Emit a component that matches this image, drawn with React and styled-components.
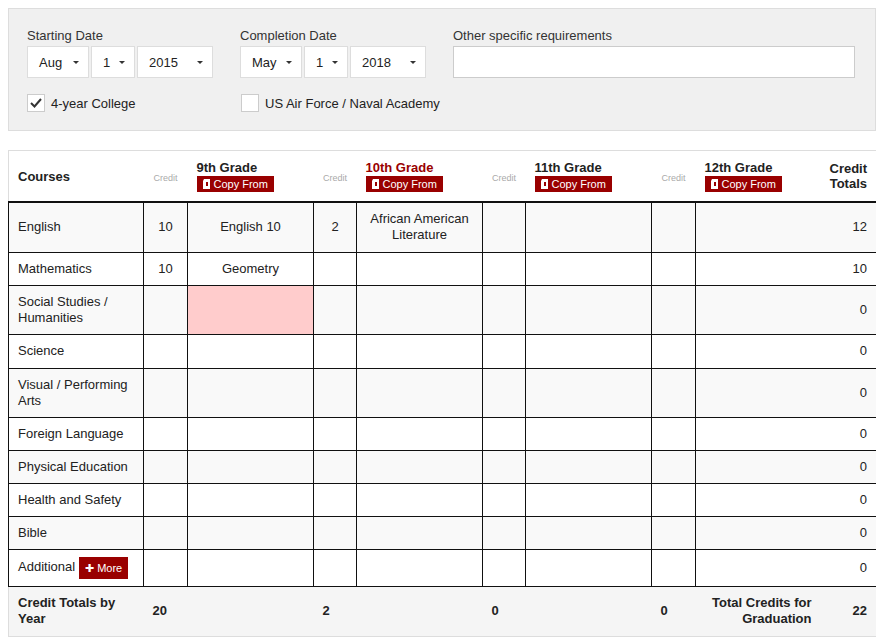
import React from 'react';
import styled, { createGlobalStyle } from 'styled-components';

const Global = createGlobalStyle`
  body { margin: 8px; font-family: "Liberation Sans", Arial, sans-serif; color: #222; background: #fff; }
`;

const Panel = styled.div`
  background: #f0f0f0;
  border: 1px solid #ddd;
  height: 123px;
  box-sizing: border-box;
  padding: 19px 18px 0;
  font-size: 13px;
  margin-bottom: 19px;
`;

const Row = styled.div`
  display: flex;
  gap: 27px;
`;

const Field = styled.div`
  display: flex;
  flex-direction: column;
  label { color: #333; margin-bottom: 1px; height: 17px; }
`;

const Selects = styled.div`
  display: flex;
  gap: 2px;
`;

const Select = styled.div`
  width: ${p => p.w}px;
  height: 32px;
  box-sizing: border-box;
  background: #fff;
  border: 1px solid #ddd;
  display: flex;
  align-items: center;
  justify-content: space-between;
  padding: 0 9px 0 11px;
  font-size: 13px;
  &::after { content: ''; border: 3px solid transparent; border-top: 3px solid #333; margin-top: 3px; }
`;

const TextInput = styled.div`
  width: 402px;
  height: 32px;
  box-sizing: border-box;
  background: #fff;
  border: 1px solid #ccc;
`;

const Checks = styled.div`
  display: flex;
  margin-top: 16px;
`;

const Check = styled.div`
  display: flex;
  align-items: center;
  gap: 6px;
  width: ${p => p.w}px;
`;

const Box = styled.div`
  width: 16px;
  height: 16px;
  border: 1px solid #ccc;
  background: #fff;
  display: flex;
  align-items: center;
  justify-content: center;
`;

const Table = styled.table`
  border-collapse: collapse;
  width: 868px;
  font-size: 13px;
  table-layout: fixed;
  border: 1px solid #ddd;
`;

const Th = styled.th`
  height: 50px;
  text-align: ${p => p.align || 'left'};
  padding: 0 9px;
  font-weight: bold;
  vertical-align: middle;
  border-bottom: 2px solid #111;
  color: ${p => (p.red ? '#990000' : '#222')};
`;

const CreditLbl = styled.span`
  font-size: 9px;
  color: #aaa;
  font-weight: normal;
`;

const CopyBtn = styled.div`
  display: inline-flex;
  align-items: center;
  gap: 3px;
  background: #990000;
  color: #fff;
  font-size: 11px;
  font-weight: normal;
  padding: 2px 6px;
  margin-top: 1px;
`;

const Tr = styled.tr`
  background: ${p => (p.stripe ? '#f9f9f9' : '#fff')};
  height: ${p => p.h}px;
`;

const Td = styled.td`
  border: 1px solid #111;
  border-right: ${p => (p.noRight ? 'none' : '1px solid #111')};
  border-left: ${p => (p.noLeft ? 'none' : '1px solid #111')};
  padding: 0 9px;
  text-align: ${p => p.align || 'left'};
  background: ${p => (p.pink ? '#ffcccc' : 'transparent')};
  line-height: 16px;
`;

const MoreBtn = styled.span`
  display: inline-block;
  background: #990000;
  color: #fff;
  font-size: 11px;
  padding: 3px 6px;
  margin-left: 4px;
  vertical-align: middle;
`;

const Foot = styled.tr`
  background: #f5f5f5;
  height: 50px;
  font-weight: bold;
  td { padding: 0 9px; line-height: 16px; }
`;

const FootNum = styled.td`
  text-align: ${p => p.align || 'left'};
`;

const Copy = () => (
  <CopyBtn>
    <svg width="8" height="10" viewBox="0 0 8 10"><path d="M1 0h6v10H0V2z" fill="#fff" /><path d="M3 3h2v4H3z" fill="#990000" /></svg>
    Copy From
  </CopyBtn>
);

const rows = [
  ['English', '10', 'English 10', '2', 'African American Literature', '12', 50],
  ['Mathematics', '10', 'Geometry', '', '', '10', 33],
  ['Social Studies / Humanities', '', '', '', '', '0', 49, true],
  ['Science', '', '', '', '', '0', 34],
  ['Visual / Performing Arts', '', '', '', '', '0', 49],
  ['Foreign Language', '', '', '', '', '0', 33],
  ['Physical Education', '', '', '', '', '0', 33],
  ['Health and Safety', '', '', '', '', '0', 33],
  ['Bible', '', '', '', '', '0', 33],
];

export default function App() {
  return (
    <>
      <Global />
      <Panel>
        <Row>
          <Field>
            <label>Starting Date</label>
            <Selects><Select w={62}>Aug</Select><Select w={44}>1</Select><Select w={76}>2015</Select></Selects>
          </Field>
          <Field>
            <label>Completion Date</label>
            <Selects><Select w={62}>May</Select><Select w={44}>1</Select><Select w={76}>2018</Select></Selects>
          </Field>
          <Field>
            <label>Other specific requirements</label>
            <TextInput />
          </Field>
        </Row>
        <Checks>
          <Check w={214}>
            <Box>
              <svg width="12" height="10" viewBox="0 0 12 10"><path d="M1 5l3.5 3.5L11 1" stroke="#333" strokeWidth="2" fill="none" /></svg>
            </Box>
            4-year College
          </Check>
          <Check w={220}><Box />US Air Force / Naval Academy</Check>
        </Checks>
      </Panel>
      <Table>
        <colgroup>
          <col style={{ width: 135 }} /><col style={{ width: 44 }} /><col style={{ width: 126 }} />
          <col style={{ width: 43 }} /><col style={{ width: 126 }} /><col style={{ width: 43 }} />
          <col style={{ width: 126 }} /><col style={{ width: 44 }} /><col style={{ width: 125 }} /><col style={{ width: 56 }} />
        </colgroup>
        <thead>
          <tr>
            <Th>Courses</Th>
            <Th align="center"><CreditLbl>Credit</CreditLbl></Th>
            <Th>9th Grade<br /><Copy /></Th>
            <Th align="center"><CreditLbl>Credit</CreditLbl></Th>
            <Th red>10th Grade<br /><Copy /></Th>
            <Th align="center"><CreditLbl>Credit</CreditLbl></Th>
            <Th>11th Grade<br /><Copy /></Th>
            <Th align="center"><CreditLbl>Credit</CreditLbl></Th>
            <Th>12th Grade<br /><Copy /></Th>
            <Th align="right">Credit Totals</Th>
          </tr>
        </thead>
        <tbody>
          {rows.map((r, i) => (
            <Tr key={r[0]} h={r[6]} stripe={i % 2 === 0}>
              <Td>{r[0]}</Td>
              <Td align="center">{r[1]}</Td>
              <Td align="center" pink={r[7]}>{r[2]}</Td>
              <Td align="center">{r[3]}</Td>
              <Td align="center">{r[4]}</Td>
              <Td /><Td /><Td />
              <Td noRight />
              <Td noLeft align="right">{r[5]}</Td>
            </Tr>
          ))}
          <Tr h={37}>
            <Td>Additional<MoreBtn>✚ More</MoreBtn></Td>
            <Td /><Td /><Td /><Td /><Td /><Td /><Td />
            <Td noRight />
            <Td noLeft align="right">0</Td>
          </Tr>
        </tbody>
        <tfoot>
          <Foot>
            <td>Credit Totals by Year</td>
            <FootNum>20</FootNum>
            <td />
            <FootNum>2</FootNum>
            <td />
            <FootNum>0</FootNum>
            <td />
            <FootNum>0</FootNum>
            <FootNum align="right">Total Credits for Graduation</FootNum>
            <FootNum align="right">22</FootNum>
          </Foot>
        </tfoot>
      </Table>
    </>
  );
}
